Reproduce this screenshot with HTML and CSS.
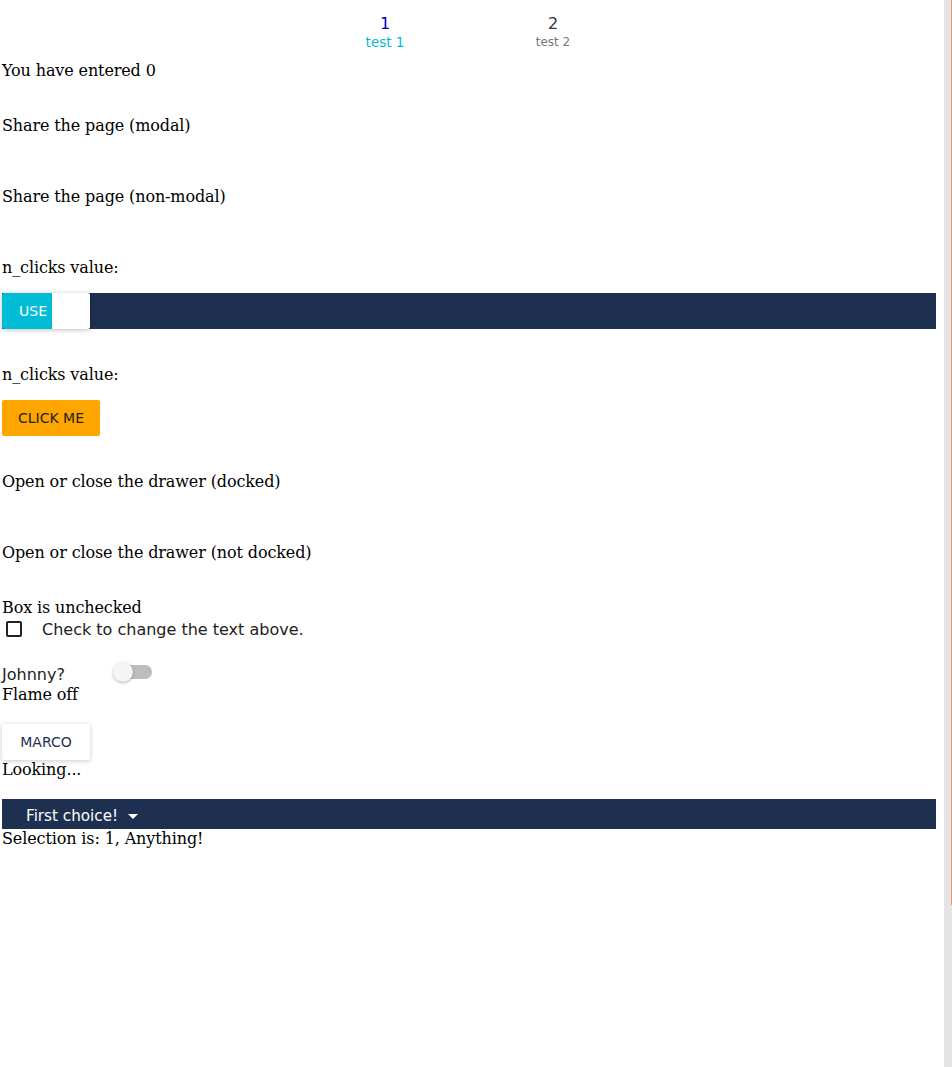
FILE: index.html
```html
<!DOCTYPE html>
<html>
<head>
<meta charset="utf-8">
<link rel="stylesheet" href="styles.css">
</head>
<body>
<div class="page">
  <div class="tabs">
    <div class="tab active"><div class="tab-num">1</div><div class="tab-label">test 1</div></div>
    <div class="tab"><div class="tab-num">2</div><div class="tab-label">test 2</div></div>
  </div>
  <div class="line entered">You have entered 0</div>
  <div class="line modal">Share the page (modal)</div>
  <div class="line nonmodal">Share the page (non-modal)</div>
  <div class="line nclicks1">n_clicks value:</div>
  <div class="bar toolbar">
    <div class="toggle"><span class="toggle-on">USE</span><span class="toggle-off"></span></div>
  </div>
  <div class="line nclicks2">n_clicks value:</div>
  <button class="btn-orange">CLICK ME</button>
  <div class="line drawer1">Open or close the drawer (docked)</div>
  <div class="line drawer2">Open or close the drawer (not docked)</div>
  <div class="line boxline">Box is unchecked</div>
  <div class="check-row"><span class="checkbox"></span><span class="check-label">Check to change the text above.</span></div>
  <div class="switch-row"><span class="switch-label">Johnny?</span><span class="switch"><span class="track"></span><span class="thumb"></span></span></div>
  <div class="line">Flame off</div>
  <button class="btn-white">MARCO</button>
  <div class="line">Looking...</div>
  <div class="bar select-bar"><span class="select-text">First choice!</span><span class="caret"></span></div>
  <div class="line">Selection is: 1, Anything!</div>
</div>
<div class="scrollbar"><div class="scroll-line"></div></div>
</body>
</html>
```
FILE: styles.css
```css
html, body {
  margin: 0;
  padding: 0;
  background: #ffffff;
}
body {
  font-family: "DejaVu Serif", serif;
  font-size: 16px;
  letter-spacing: -0.12px;
  color: #000;
}
.page {
  margin-left: 2px;
  width: 934px;
}
.tabs {
  display: flex;
  justify-content: center;
  padding-top: 13px;
  height: 48px;
  letter-spacing: 0;
}
.tab {
  width: 168px;
  text-align: center;
  font-family: "DejaVu Sans", sans-serif;
}
.tab-num {
  font-size: 16px;
  line-height: 19px;
  height: 20px;
  padding-top: 1px;
  color: #333;
}
.tab-label {
  font-size: 12px;
  line-height: 15px;
  color: #777;
  padding-top: 1px;
}
.tab.active .tab-num { color: #0000c8; }
.tab.active .tab-label { color: #00bcd4; font-size: 13.5px; }
.line {
  line-height: 19px;
  height: 19px;
  white-space: nowrap;
}
.entered { margin-top: 0; }
.modal { margin-top: 36px; }
.nonmodal { margin-top: 52px; }
.nclicks1 { margin-top: 52px; }
.bar {
  background: #1e3050;
  display: flex;
  align-items: center;
  letter-spacing: 0;
}
.toolbar {
  margin-top: 16px;
  height: 36px;
}
.toggle {
  display: flex;
  height: 36px;
  width: 88px;
  box-shadow: 0 1px 5px rgba(0,0,0,0.25);
  border-radius: 2px;
  overflow: hidden;
}
.toggle-on {
  width: 50px;
  box-sizing: border-box;
  padding-left: 17px;
  background: #00bcd4;
  color: #fff;
  font-family: "DejaVu Sans", sans-serif;
  font-size: 14px;
  display: flex;
  align-items: center;
}
.toggle-off {
  flex: 1;
  background: #fff;
}
.nclicks2 { margin-top: 36px; }
button {
  display: block;
  border: none;
  font-family: "DejaVu Sans", sans-serif;
  font-size: 14px;
  letter-spacing: 0;
  height: 36px;
  padding: 0;
  border-radius: 2px;
}
.btn-orange {
  margin-top: 16px;
  width: 98px;
  background: #ffa500;
  color: #222;
}
.drawer1 { margin-top: 36px; }
.drawer2 { margin-top: 52px; }
.boxline { margin-top: 36px; }
.check-row {
  display: flex;
  align-items: center;
  height: 24px;
  letter-spacing: 0;
}
.checkbox {
  width: 12px;
  height: 12px;
  border: 2px solid #222;
  border-radius: 2px;
  margin-left: 4px;
}
.check-label {
  margin-left: 20px;
  font-family: "DejaVu Sans", sans-serif;
  font-size: 16px;
  color: #222;
}
.switch-row {
  margin-top: 20px;
  height: 24px;
  display: flex;
  align-items: center;
  letter-spacing: 0;
}
.switch-label {
  font-family: "DejaVu Sans", sans-serif;
  font-size: 16px;
  color: #222;
  width: 111px;
  padding-top: 2px;
}
.switch {
  position: relative;
  width: 39px;
  height: 20px;
  display: block;
  margin-top: -2px;
}
.track {
  position: absolute;
  left: 5px;
  top: 3px;
  width: 34px;
  height: 14px;
  border-radius: 7px;
  background: #bdbdbd;
}
.thumb {
  position: absolute;
  left: 0;
  top: 0;
  width: 20px;
  height: 20px;
  border-radius: 50%;
  background: #f5f5f5;
  box-shadow: 0 1px 3px rgba(0,0,0,0.3);
}
.btn-white {
  margin-top: 20px;
  width: 88px;
  background: #fff;
  color: #1e3050;
  box-shadow: 0 1px 5px rgba(0,0,0,0.22);
}
.select-bar {
  margin-top: 20px;
  height: 30px;
}
.select-text {
  margin-left: 24px;
  margin-top: 4px;
  color: #fff;
  font-family: "DejaVu Sans", sans-serif;
  font-size: 15.2px;
}
.caret {
  margin-left: 10px;
  margin-top: 5px;
  width: 0;
  height: 0;
  border-left: 5px solid transparent;
  border-right: 5px solid transparent;
  border-top: 5px solid #fff;
}
.scrollbar {
  position: fixed;
  top: 0;
  right: 0;
  width: 8px;
  height: 100%;
  background: #e4e4e4;
}
.scroll-line {
  position: absolute;
  right: 0;
  top: 0;
  width: 1px;
  height: 905px;
  background: #e49a72;
}
```
